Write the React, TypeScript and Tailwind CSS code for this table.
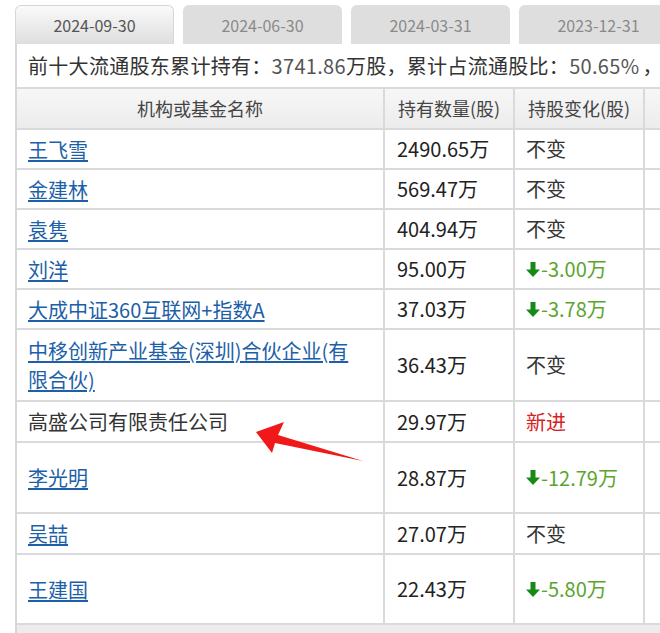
import * as React from "react"

type Change = { kind: "same" } | { kind: "new" } | { kind: "down"; value: string }

interface Holder {
  name: string
  link: boolean
  amount: string
  change: Change
  h: string
}

const tabs = ["2024-09-30", "2024-06-30", "2024-03-31", "2023-12-31"]

const holders: Holder[] = [
  { name: "王飞雪", link: true, amount: "2490.65万", change: { kind: "same" }, h: "h-[40px]" },
  { name: "金建林", link: true, amount: "569.47万", change: { kind: "same" }, h: "h-[40px]" },
  { name: "袁隽", link: true, amount: "404.94万", change: { kind: "same" }, h: "h-[40px]" },
  { name: "刘洋", link: true, amount: "95.00万", change: { kind: "down", value: "-3.00万" }, h: "h-[40px]" },
  { name: "大成中证360互联网+指数A", link: true, amount: "37.03万", change: { kind: "down", value: "-3.78万" }, h: "h-[40px]" },
  { name: "中移创新产业基金(深圳)合伙企业(有限合伙)", link: true, amount: "36.43万", change: { kind: "same" }, h: "h-[72px]" },
  { name: "高盛公司有限责任公司", link: false, amount: "29.97万", change: { kind: "new" }, h: "h-[41px]" },
  { name: "李光明", link: true, amount: "28.87万", change: { kind: "down", value: "-12.79万" }, h: "h-[71px]" },
  { name: "吴喆", link: true, amount: "27.07万", change: { kind: "same" }, h: "h-[41px]" },
  { name: "王建国", link: true, amount: "22.43万", change: { kind: "down", value: "-5.80万" }, h: "h-[70px]" },
]

function DownArrow() {
  return (
    <svg width="14" height="15" viewBox="0 0 14 15" className="mr-[1px] shrink-0">
      <path d="M4.5 0h5v7.5h4.5l-7 7.5-7-7.5h4.5z" fill="#168a16" />
    </svg>
  )
}

function ChangeCell({ change }: { change: Change }) {
  if (change.kind === "same") return <span className="text-[#333]">不变</span>
  if (change.kind === "new") return <span className="text-[#d62222]">新进</span>
  return (
    <span className="flex items-center text-[#5ba52e]">
      <DownArrow />
      {change.value}
    </span>
  )
}

export default function App() {
  const cell = "border-b-2 border-r-2 border-[#dadada] flex items-center"
  const head = `${cell} h-[41px] bg-gradient-to-b from-[#f7f7f7] to-[#ececec]`
  return (
    <div
      className="relative w-[660px] h-[633px] overflow-hidden bg-white"
      style={{ fontFamily: '"Noto Sans CJK SC", "Noto Sans", sans-serif' }}
    >
      <div className="pl-[15px] w-[900px]">
        <div className="flex gap-[9px] pt-[5px]">
          {tabs.map((t, i) => (
            <div
              key={t}
              className={
                i === 0
                  ? "w-[159px] h-[39px] rounded-t-[6px] border border-b-0 border-[#d6d6d6] bg-gradient-to-b from-[#fafafa] to-[#dedede] flex items-center justify-center text-[16px] text-[#555]"
                  : "w-[159px] h-[39px] rounded-t-[6px] bg-[#dedede] flex items-center justify-center text-[16px] text-[#8a8a8a]"
              }
            >
              {t}
            </div>
          ))}
        </div>

        <div className="border-l-2 border-[#d6d6d6]">
          <div className="h-[45px] flex items-center pl-[11px] text-[20px] tracking-[0.3px] text-[#333] whitespace-nowrap border-b-2 border-[#dadada]">
            前十大流通股东累计持有：<span className="text-[#555]">3741.86</span>万股，累计占流通股比：<span className="text-[#555]">50.65%</span>
            <span className="ml-[3px] inline-block w-[8px] overflow-visible">，</span>
          </div>

          <div className="grid grid-cols-[368px_130px_130px_260px] text-[20px] text-[#333]">
            <div className={`${head} justify-center text-[18px] text-[#444]`}>机构或基金名称</div>
            <div className={`${head} justify-center text-[18px] text-[#444]`}>持有数量(股)</div>
            <div className={`${head} justify-center text-[18px] text-[#444]`}>持股变化(股)</div>
            <div className={head} />

            {holders.map((r) => (
              <React.Fragment key={r.name}>
                <div className={`${cell} ${r.h} pl-[11px] pr-[20px] leading-[29px]`}>
                  {r.link ? (
                    <a href="#" className="text-[#1d5fa8] underline underline-offset-2">
                      {r.name}
                    </a>
                  ) : (
                    <span className="text-[#333]">{r.name}</span>
                  )}
                </div>
                <div className={`${cell} ${r.h} pl-[12px] text-[#222]`}>{r.amount}</div>
                <div className={`${cell} ${r.h} pl-[11px]`}>
                  <ChangeCell change={r.change} />
                </div>
                <div className={`${cell} ${r.h}`} />
              </React.Fragment>
            ))}
          </div>

          <div className="h-[10px] bg-[#ececec]" />
        </div>
      </div>

      <svg className="absolute left-0 top-0 pointer-events-none" width="660" height="633">
        <polygon points="256,432 284,422 278,435 363,461 275,443 272,453" fill="#f01818" />
      </svg>
    </div>
  )
}
